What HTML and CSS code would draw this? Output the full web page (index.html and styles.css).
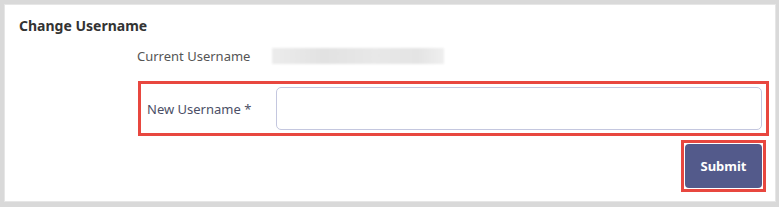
FILE: index.html
```html
<!DOCTYPE html>
<html lang="en">
<head>
    <meta charset="UTF-8">
    <meta name="viewport" content="width=device-width, initial-scale=1.0">
    <title>Change Username</title>
    <link rel="stylesheet" href="styles.css">
</head>
<body>
    <div class="card">
        <h2 class="card-title">Change Username</h2>
        <div class="row current">
            <span class="label">Current Username</span>
            <span class="blurred"></span>
        </div>
        <div class="highlight row new">
            <label for="newUsername" class="label">New Username *</label>
            <input type="text" id="newUsername" name="newUsername">
        </div>
        <div class="actions">
            <div class="highlight btn-wrap">
                <button type="button" id="submitButton">Submit</button>
            </div>
        </div>
    </div>
</body>
</html>
```

FILE: styles.css
```css
body {
    margin: 0;
    padding: 4px 3px 5px 4px;
    background-color: #d9d9d9;
    font-family: "Noto Sans", Arial, sans-serif;
}
.card {
    box-sizing: border-box;
    height: 198px;
    background: #fff;
    border: 1px solid #e6e6e6;
}
.card-title {
    margin: 11px 0 0 14px;
    font-size: 14px;
    line-height: 20px;
    font-weight: bold;
    color: #333;
}
.row {
    display: flex;
    align-items: center;
}
.label {
    font-size: 13px;
    color: #555;
}
.current {
    margin: 10px 0 0 132px;
    height: 20px;
}
.current .label {
    width: 135px;
}
.blurred {
    width: 172px;
    height: 16px;
    background: linear-gradient(90deg, #ececec, #e2e2e2 30%, #e8e8e8 60%, #e4e4e4 85%, #efefef);
    filter: blur(1px);
}
.highlight {
    border: 3px solid #e8473f;
}
.new {
    margin: 15px 6px 0 133px;
    padding: 3px 4px 3px 6px;
}
.new .label {
    width: 129px;
    color: #4b4f66;
}
input {
    flex: 1;
    height: 43px;
    box-sizing: border-box;
    border: 1px solid #c4c7df;
    border-radius: 5px;
    font-size: 14px;
    padding: 0 10px;
}
.actions {
    display: flex;
    justify-content: flex-end;
    margin: 4px 9px 0 0;
}
.btn-wrap {
    padding: 1px;
}
button {
    width: 77px;
    height: 44px;
    background-color: #535a8b;
    color: #fff;
    border: none;
    border-radius: 4px;
    font-family: "Noto Sans", Arial, sans-serif;
    font-size: 13px;
    font-weight: bold;
    cursor: pointer;
}
```
